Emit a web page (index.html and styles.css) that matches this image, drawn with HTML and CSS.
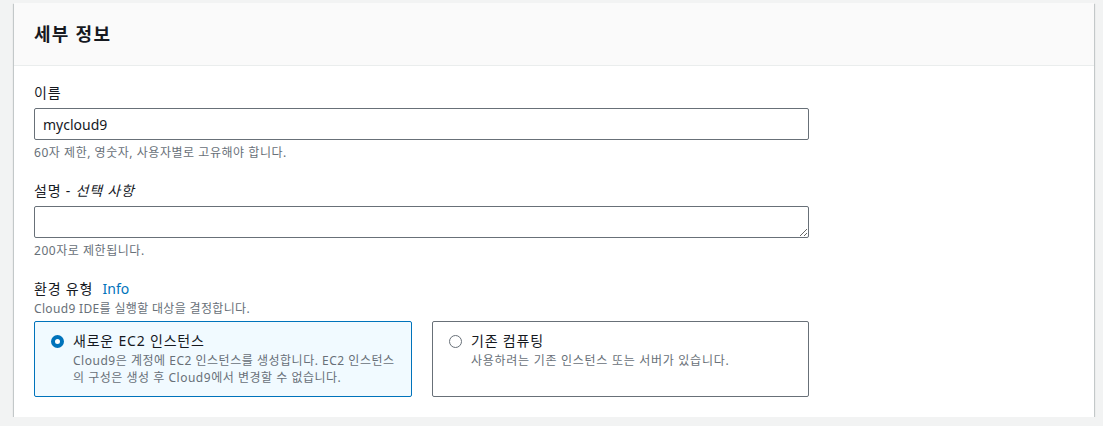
FILE: index.html
```html
<!DOCTYPE html>
<html lang="ko">
<head>
<meta charset="utf-8">
<link rel="stylesheet" href="styles.css">
</head>
<body>
<div class="card">
  <div class="card-header"><h2>세부 정보</h2></div>
  <div class="card-body">
    <div class="field">
      <label class="label">이름</label>
      <input class="input" type="text" value="mycloud9">
      <div class="hint">60자 제한, 영숫자, 사용자별로 고유해야 합니다.</div>
    </div>
    <div class="field">
      <label class="label">설명 - <i>선택 사항</i></label>
      <textarea class="textarea" rows="1"></textarea>
      <div class="hint">200자로 제한됩니다.</div>
    </div>
    <div class="field last">
      <div class="label">환경 유형 <a class="info">Info</a></div>
      <div class="desc">Cloud9 IDE를 실행할 대상을 결정합니다.</div>
      <div class="tiles">
        <div class="tile selected">
          <div class="tile-title"><span class="radio on"></span>새로운 EC2 인스턴스</div>
          <div class="tile-desc">Cloud9은 계정에 EC2 인스턴스를 생성합니다. EC2 인스턴스의 구성은 생성 후 Cloud9에서 변경할 수 없습니다.</div>
        </div>
        <div class="tile">
          <div class="tile-title"><span class="radio"></span>기존 컴퓨팅</div>
          <div class="tile-desc wide">사용하려는 기존 인스턴스 또는 서버가 있습니다.</div>
        </div>
      </div>
    </div>
  </div>
</div>
</body>
</html>
```
FILE: styles.css
```css
* { box-sizing: border-box; }
html, body { margin: 0; }
body {
  background: #f2f3f3;
  padding: 3px 0 0 14px;
  font-family: "Noto Sans", "Noto Sans CJK KR", sans-serif;
  color: #16191f;
  letter-spacing: 0.05em;
}
.card {
  width: 1080px;
  background: #fff;
  box-shadow: 0 1px 1px 0 rgba(0,28,36,.3), 1px 1px 1px 0 rgba(0,28,36,.15), -1px 1px 1px 0 rgba(0,28,36,.15);
}
.card-header {
  background: #fafafa;
  border-bottom: 1px solid #eaeded;
  padding: 19px 20px 19px 20px;
}
.card-header h2 {
  margin: 0;
  font-size: 18px;
  line-height: 24px;
  font-weight: 700;
  letter-spacing: 0.07em;
}
.card-body {
  padding: 16px 20px 20px 20px;
}
.field {
  width: 775px;
  margin-bottom: 19px;
}
.field.last { margin-bottom: 0; }
.label {
  display: block;
  font-size: 14px;
  line-height: 22px;
  color: #16191f;
}
.label i { font-style: italic; }
.info {
  color: #0073bb;
  margin-left: 5px;
  letter-spacing: 0;
}
.input, .textarea {
  display: block;
  width: 775px;
  height: 32px;
  margin-top: 4px;
  border: 1px solid #687078;
  border-radius: 2px;
  padding: 4px 8px;
  font-family: inherit;
  font-size: 14px;
  color: #16191f;
  background: #fff;
  outline: none;
  letter-spacing: normal;
}
.textarea { resize: vertical; line-height: 22px; }
.hint {
  margin-top: 5px;
  font-size: 12px;
  line-height: 16px;
  color: #687078;
  letter-spacing: 0.045em;
}
.desc {
  margin-top: 1px;
  font-size: 12px;
  line-height: 16px;
  color: #687078;
  letter-spacing: 0.028em;
}
.tiles {
  display: grid;
  grid-template-columns: 378px 377px;
  gap: 20px;
  margin-top: 4px;
}
.tile {
  height: 76px;
  border: 1px solid #687078;
  border-radius: 2px;
  padding: 8px 16px 8px 16px;
}
.tile.selected {
  background: #f1faff;
  border-color: #0073bb;
}
.tile-title {
  display: flex;
  align-items: center;
  font-size: 14px;
  line-height: 22px;
}
.radio {
  width: 13px;
  height: 13px;
  border-radius: 50%;
  border: 1px solid #687078;
  background: #fff;
  margin: 0 9px 0 0;
  flex: none;
}
.radio.on {
  border: 4px solid #0073bb;
}
.tile-desc {
  padding-left: 22px;
  font-size: 12px;
  line-height: 17px;
  color: #687078;
  letter-spacing: 0.043em;
}
.tile-desc.wide { letter-spacing: 0.06em; }
```
